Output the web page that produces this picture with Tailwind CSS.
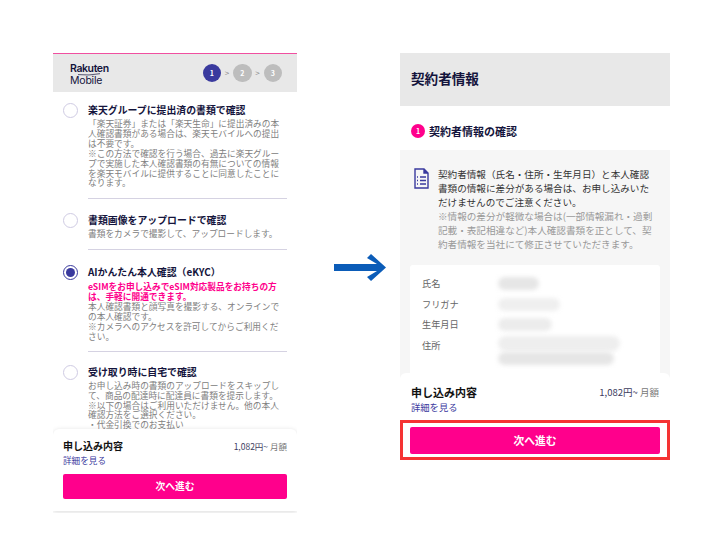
<!DOCTYPE html>
<html lang="ja">
<head>
  <meta charset="UTF-8"/>
  <title>eKYC</title>
  <script src="https://cdn.jsdelivr.net/npm/@tailwindcss/browser@4"></script>
</head>
<body class="bg-white w-[710px] h-[533px] overflow-hidden font-['Noto_Sans_CJK_JP','Noto_Sans',sans-serif]">
  <div class="flex items-start pl-[53px] pt-[53px]">

    <!-- left phone -->
    <div class="relative w-[244px] h-[460px] overflow-hidden border-t border-[#f04fa0]">
      <div class="h-[38px] bg-[#e8e8e8] flex items-center justify-between pl-[17px] pr-[15px]">
        <div class="relative mt-[3px] text-[#14143c] font-['Inter',sans-serif]">
          <div class="text-[10.5px] leading-[12px] font-semibold tracking-[-0.4px]">Rakuten</div>
          <div class="text-[10.5px] leading-[12px] font-normal tracking-[-0.2px]">Mobile</div>
          <svg class="absolute left-[8px] top-[10px] w-[22px] h-[3px]" viewBox="0 0 22 3" fill="none" stroke="#14143c" stroke-width="0.7"><path d="M0 1.6q11 1.2 22-.9"/></svg>
        </div>
        <div class="flex items-center text-white text-[7px] font-bold">
          <span class="w-[18.5px] h-[18.5px] rounded-full bg-[#3a3a9e] flex items-center justify-center">1</span>
          <span class="w-[12px] text-center text-[#888] text-[8px] font-normal">&gt;</span>
          <span class="w-[18.5px] h-[18.5px] rounded-full bg-[#bdbdbd] flex items-center justify-center">2</span>
          <span class="w-[12px] text-center text-[#888] text-[8px] font-normal">&gt;</span>
          <span class="w-[18.5px] h-[18.5px] rounded-full bg-[#bdbdbd] flex items-center justify-center">3</span>
        </div>
      </div>

      <div class="px-[10px] pt-[11px] text-[8.7px] leading-[9.9px] text-[#808080]">
        <div class="flex gap-[10px]">
          <span class="w-[15px] h-[15px] rounded-full border border-[#cfcbe3] shrink-0"></span>
          <div class="flex-1">
            <h3 class="text-[9.9px] leading-[14px] font-bold text-[#14143c]">楽天グループに提出済の書類で確認</h3>
            <p class="mt-[2px]">「楽天証券」または「楽天生命」に提出済みの本人確認書類がある場合は、楽天モバイルへの提出は不要です。<br/>※この方法で確認を行う場合、過去に楽天グループで実施した本人確認書類の有無についての情報を楽天モバイルに提供することに同意したことになります。</p>
            <div class="h-px bg-[#d5d2e2] mt-[10px]"></div>
          </div>
        </div>

        <div class="flex gap-[10px] mt-[14px]">
          <span class="w-[15px] h-[15px] rounded-full border border-[#cfcbe3] shrink-0"></span>
          <div class="flex-1">
            <h3 class="text-[9.9px] leading-[14px] font-bold text-[#14143c]">書類画像をアップロードで確認</h3>
            <p class="mt-[2px]">書類をカメラで撮影して、アップロードします。</p>
            <div class="h-px bg-[#d5d2e2] mt-[10px]"></div>
          </div>
        </div>

        <div class="flex gap-[10px] mt-[15px]">
          <span class="w-[15px] h-[15px] rounded-full border border-[#3a3a9e] shrink-0 flex items-center justify-center"><span class="w-[9px] h-[9px] rounded-full bg-[#3a3a9e]"></span></span>
          <div class="flex-1">
            <h3 class="text-[9.9px] leading-[14px] font-bold text-[#14143c]">AIかんたん本人確認（eKYC）</h3>
            <p class="mt-[3px] font-bold text-[#ff008c]">eSIMをお申し込みでeSIM対応製品をお持ちの方は、手軽に開通できます。</p>
            <p>本人確認書類と顔写真を撮影する、オンラインでの本人確認です。<br/>※カメラへのアクセスを許可してからご利用ください。</p>
            <div class="h-px bg-[#d5d2e2] mt-[9px]"></div>
          </div>
        </div>

        <div class="flex gap-[10px] mt-[13px]">
          <span class="w-[15px] h-[15px] rounded-full border border-[#cfcbe3] shrink-0"></span>
          <div class="flex-1">
            <h3 class="text-[9.9px] leading-[14px] font-bold text-[#14143c]">受け取り時に自宅で確認</h3>
            <p class="mt-[2px]">お申し込み時の書類のアップロードをスキップして、商品の配達時に配達員に書類を提示します。<br/>※以下の場合はご利用いただけません。他の本人確認方法をご選択ください。<br/>・代金引換でのお支払い</p>
          </div>
        </div>
      </div>

      <!-- bottom sheet -->
      <div class="absolute left-0 right-0 top-[375px] h-[82px] bg-white rounded-t-[6px] shadow-[0_1px_5px_rgba(0,0,0,0.15)] px-[10px] pt-[10px]">
        <div class="flex justify-between items-center">
          <span class="text-[10px] leading-[14px] font-bold text-[#111]">申し込み内容</span>
          <span class="text-[8.5px] text-[#3c3c5e]">1,082円~ <span class="text-[#777]">月額</span></span>
        </div>
        <div class="text-[8.6px] leading-[10px] mt-[2px] text-[#3a3a9e]">詳細を見る</div>
        <button class="w-full h-[25px] mt-[9px] rounded-[2px] bg-[#ff008c] text-white text-[9.8px] font-bold">次へ進む</button>
      </div>
    </div>

    <!-- arrow -->
    <svg class="w-[52px] h-[27px] ml-[37px] mt-[201px] shrink-0" viewBox="0 0 52 27">
      <path d="M0 10H43L33 4 37 0 52 13.5 37 27 33 23 43 17H0z" fill="#0b5cb8"/>
    </svg>

    <!-- right phone -->
    <div class="relative w-[270px] h-[412px] ml-[14px] overflow-hidden">
      <div class="h-[53px] bg-[#e8e8e8] flex items-center pl-[11px] pb-[3px]">
        <h1 class="text-[13.6px] font-bold text-[#14143c]">契約者情報</h1>
      </div>
      <div class="h-[44px] flex items-center gap-[4px] pl-[11px] pt-[6px]">
        <span class="w-[14px] h-[14px] rounded-full bg-[#ff008c] text-white text-[7px] font-bold flex items-center justify-center">1</span>
        <h2 class="text-[11px] font-bold text-[#14143c]">契約者情報の確認</h2>
      </div>
      <div class="bg-[#f6f6f6] h-[300px] px-[10px] pt-[17px]">
        <div class="flex gap-[9px] pl-[4px] pr-[6px]">
          <svg class="w-[15px] h-[21px] shrink-0 mt-[1px]" viewBox="0 0 15 21" fill="none" stroke="#3a3a9e" stroke-width="1.4">
            <path d="M1 1h9l4 4v15H1z"/>
            <path d="M10 1v4h4" fill="#3a3a9e"/>
            <path d="M3 9h1M6 9h6M3 12.5h1M6 12.5h6M3 16h1M6 16h6"/>
          </svg>
          <div class="text-[9.6px] leading-[14px] text-[#333] flex-1">
            <p>契約者情報（氏名・住所・生年月日）と本人確認書類の情報に差分がある場合は、お申し込みいただけませんのでご注意ください。</p>
            <p class="text-[#999]">※情報の差分が軽微な場合は(一部情報漏れ・過剰記載・表記相違など)本人確認書類を正として、契約者情報を当社にて修正させていただきます。</p>
          </div>
        </div>
        <div class="bg-white rounded-[3px] mt-[14px] h-[120px] pl-[12px] pt-[8px] text-[9.2px] leading-[20.5px] text-[#666] grid grid-cols-[76px_1fr] content-start">
          <span>氏名</span><span class="block w-[41px] h-[13px] mt-[4px] rounded-full bg-[#e6e6e6] blur-[2px]"></span>
          <span>フリガナ</span><span class="block w-[62px] h-[13px] mt-[4px] rounded-full bg-[#efefef] blur-[2px]"></span>
          <span>生年月日</span><span class="block w-[54px] h-[13px] mt-[4px] rounded-full bg-[#ececec] blur-[2px]"></span>
          <span>住所</span>
          <div class="pt-[1px]">
            <span class="block w-[122px] h-[15px] rounded-full bg-[#eeeeee] blur-[2px]"></span>
            <span class="block w-[116px] h-[13px] mt-[1px] rounded-full bg-[#e6e6e6] blur-[2px]"></span>
          </div>
        </div>
      </div>

      <!-- bottom sheet -->
      <div class="absolute left-0 right-0 top-[320px] h-[92px] bg-white rounded-t-[6px] px-[11px] pt-[11px]">
        <div class="flex justify-between items-center">
          <span class="text-[11px] leading-[16px] font-bold text-[#111]">申し込み内容</span>
          <span class="text-[9.5px] text-[#3c3c5e]">1,082円~ <span class="text-[#777]">月額</span></span>
        </div>
        <div class="text-[9.3px] leading-[12px] mt-[1px] text-[#3a3a9e]">詳細を見る</div>
      </div>
      <div class="absolute left-0 right-0 top-[367px] h-[40px] border-[3px] border-[#f53333] bg-white px-[7px] pt-[3px]">
        <button class="w-full h-[27px] rounded-[2px] bg-[#ff008c] text-white text-[10.8px] font-bold">次へ進む</button>
      </div>
    </div>
  </div>
</body>
</html>
